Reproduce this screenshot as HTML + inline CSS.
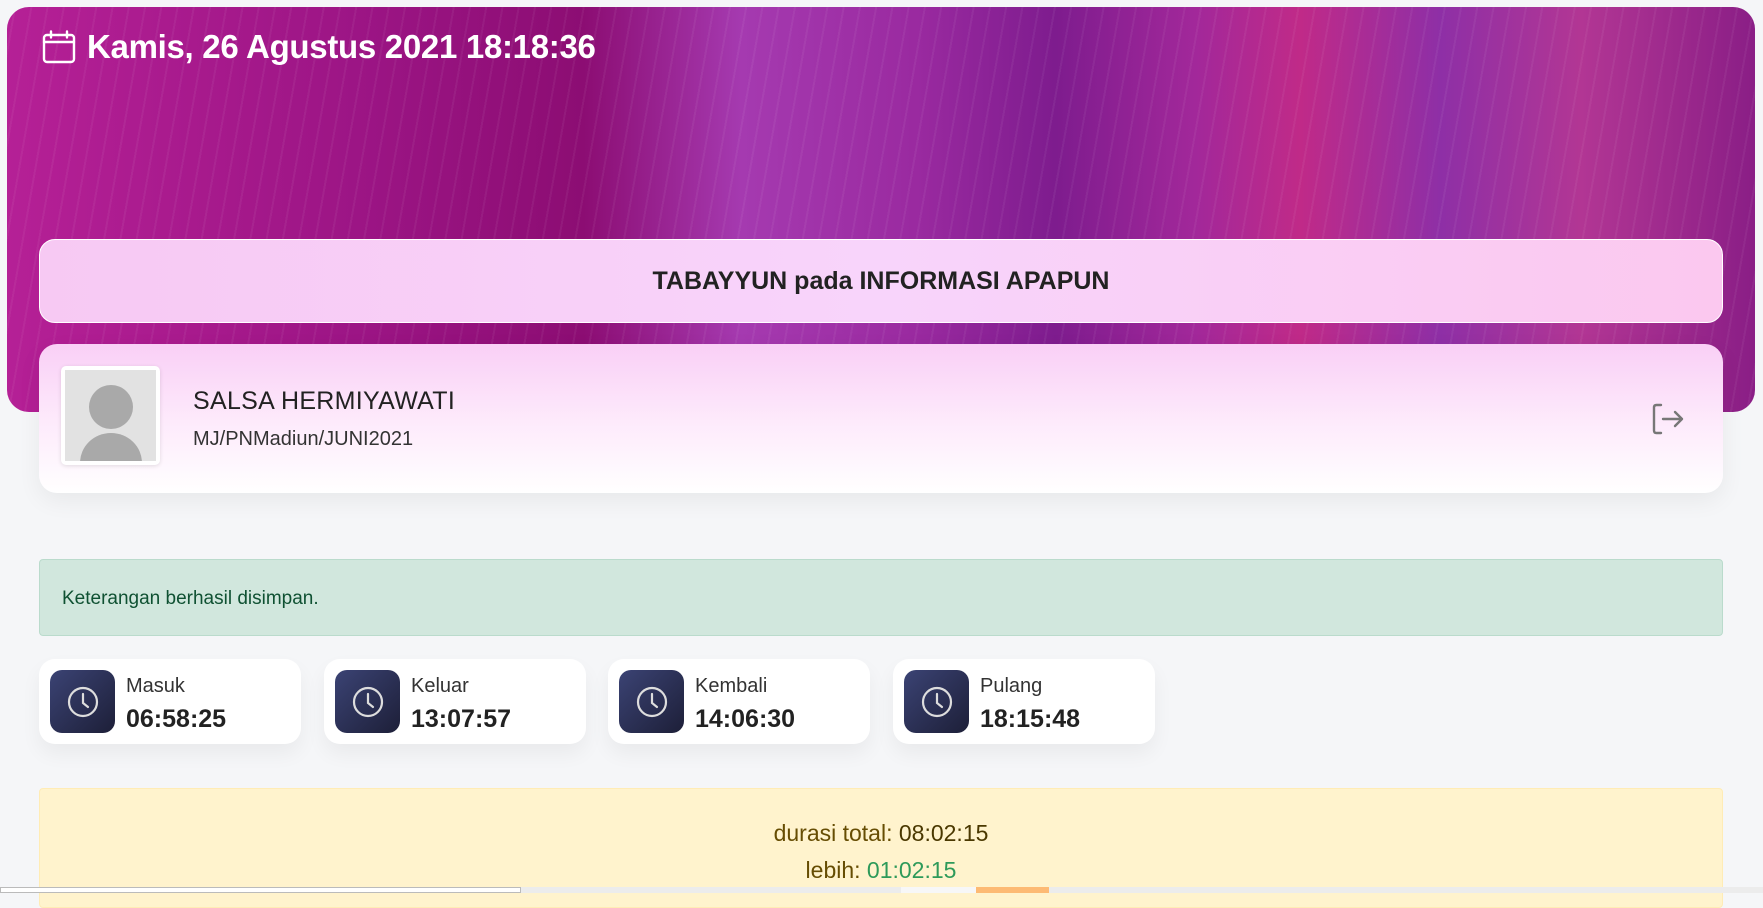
<!DOCTYPE html>
<html><head><meta charset="utf-8">
<style>
*{box-sizing:border-box;margin:0;padding:0}
html,body{width:1763px;height:893px;overflow:hidden;background:#f5f6f8;font-family:"Liberation Sans",sans-serif;color:#212529}
.banner{position:absolute;left:7px;top:7px;width:1748px;height:405px;border-radius:22px;overflow:hidden;
background:
repeating-linear-gradient(100deg,rgba(255,255,255,0) 0 7px,rgba(255,255,255,.05) 7px 9px,rgba(255,255,255,0) 9px 16px),
linear-gradient(90deg,#b52096 0%,#9c1585 20%,#8c0d73 33%,#a53ab0 42%,#9a2aa0 52%,#7e1c8e 60%,#a2289a 68%,#c02a88 74%,#8e2fa6 82%,#b23694 90%,#8a1e86 100%);}
.title{position:absolute;left:42px;top:28px;color:#fff;font-size:33px;font-weight:bold;display:flex;align-items:center;gap:11px;z-index:2;letter-spacing:-0.3px}
.ann{position:absolute;left:39px;top:239px;width:1684px;height:84px;border-radius:16px;border:1px solid #fff;
background:linear-gradient(90deg,#f7c9f3,#f8d4fb 50%,#fbc8ef);display:flex;align-items:center;justify-content:center;font-size:25px;font-weight:bold;color:#222;z-index:2}
.prof{position:absolute;left:39px;top:344px;width:1684px;height:149px;border-radius:18px;
background:linear-gradient(180deg,#f9cff6 0%,#fde9fb 50%,#fff 100%);box-shadow:0 8px 24px rgba(0,0,0,.06);z-index:2}
.av{position:absolute;left:22px;top:22px;width:99px;height:99px;background:#fff;border-radius:5px;box-shadow:0 1px 4px rgba(0,0,0,.12);padding:4px}
.av div{width:100%;height:100%;background:#e2e2e2;position:relative;overflow:hidden}
.name{position:absolute;left:154px;top:43px;font-size:25px;color:#222;letter-spacing:.3px}
.sub{position:absolute;left:154px;top:84px;font-size:20px;color:#333}
.alert{position:absolute;left:39px;top:559px;width:1684px;height:77px;background:#d1e7dd;border:1px solid #badbcc;border-radius:4px;color:#0f5132;font-size:19px;padding:28px 22px}
.card{position:absolute;top:659px;width:262px;height:85px;background:#fff;border-radius:16px;box-shadow:0 10px 20px rgba(0,0,0,.05)}
.ic{position:absolute;left:11px;top:11px;width:65px;height:63px;border-radius:12px;background:linear-gradient(135deg,#3b4374,#1d1f38);display:flex;align-items:center;justify-content:center}
.lb{position:absolute;left:87px;top:16px;font-size:20px;color:#333}
.tm{position:absolute;left:87px;top:46px;font-size:25px;font-weight:bold;color:#222}
.warn{position:absolute;left:39px;top:788px;width:1684px;height:120px;background:#fff3cd;border:1px solid #ffecb5;border-radius:4px;text-align:center;color:#664d03;font-size:23px}
.bar{position:absolute;left:0;top:887px;width:1763px;height:6px;background:#ececec;z-index:5}
</style></head><body>
<div class="banner"></div>
<div class="title"><svg width="34" height="34" viewBox="0 0 34 34" fill="none" stroke="#fff" stroke-width="2.4" stroke-linecap="round"><rect x="2" y="5" width="30" height="27" rx="3"/><path d="M2 12h30M9 1.5v6M25 1.5v6"/></svg>Kamis, 26 Agustus 2021 18:18:36</div>
<div class="ann">TABAYYUN pada INFORMASI APAPUN</div>
<div class="prof">
<div class="av"><div><span style="position:absolute;left:24px;top:15px;width:44px;height:44px;border-radius:50%;background:#a9a9a9"></span><span style="position:absolute;left:15px;top:63px;width:62px;height:60px;border-radius:50%;background:#a9a9a9"></span></div></div>
<div class="name">SALSA HERMIYAWATI</div>
<div class="sub">MJ/PNMadiun/JUNI2021</div>
<svg style="position:absolute;left:1612px;top:58px" width="34" height="34" viewBox="0 0 34 34" fill="none" stroke="#777" stroke-width="2.4" stroke-linecap="round" stroke-linejoin="round"><path d="M10 3H5.5Q3 3 3 5.5v23Q3 31 5.5 31H10"/><path d="M12 17h19M24 10l7 7-7 7"/></svg>
</div>
<div class="alert">Keterangan berhasil disimpan.</div>
<div class="card" style="left:39px"><div class="ic"><svg width="34" height="34" viewBox="0 0 34 34" fill="none" stroke="#ddd" stroke-width="2.2"><circle cx="17" cy="17" r="14"/><path d="M17 9v9l5 4" stroke-linecap="round"/></svg></div><div class="lb">Masuk</div><div class="tm">06:58:25</div></div>
<div class="card" style="left:324px"><div class="ic"><svg width="34" height="34" viewBox="0 0 34 34" fill="none" stroke="#ddd" stroke-width="2.2"><circle cx="17" cy="17" r="14"/><path d="M17 9v9l5 4" stroke-linecap="round"/></svg></div><div class="lb">Keluar</div><div class="tm">13:07:57</div></div>
<div class="card" style="left:608px"><div class="ic"><svg width="34" height="34" viewBox="0 0 34 34" fill="none" stroke="#ddd" stroke-width="2.2"><circle cx="17" cy="17" r="14"/><path d="M17 9v9l5 4" stroke-linecap="round"/></svg></div><div class="lb">Kembali</div><div class="tm">14:06:30</div></div>
<div class="card" style="left:893px"><div class="ic"><svg width="34" height="34" viewBox="0 0 34 34" fill="none" stroke="#ddd" stroke-width="2.2"><circle cx="17" cy="17" r="14"/><path d="M17 9v9l5 4" stroke-linecap="round"/></svg></div><div class="lb">Pulang</div><div class="tm">18:15:48</div></div>
<div class="warn"><div style="margin-top:31px">durasi total: <span style="color:#4a3800">08:02:15</span></div><div style="margin-top:10px">lebih: <span style="color:#2e9a5a">01:02:15</span></div></div>
<div class="bar"><div style="position:absolute;left:0;top:0;width:521px;height:6px;background:#fff;border:1px solid #bbb"></div><div style="position:absolute;left:901px;top:0;width:75px;height:6px;background:#f7f7f7"></div><div style="position:absolute;left:976px;top:0;width:73px;height:6px;background:#fdba74"></div></div>
</body></html>
